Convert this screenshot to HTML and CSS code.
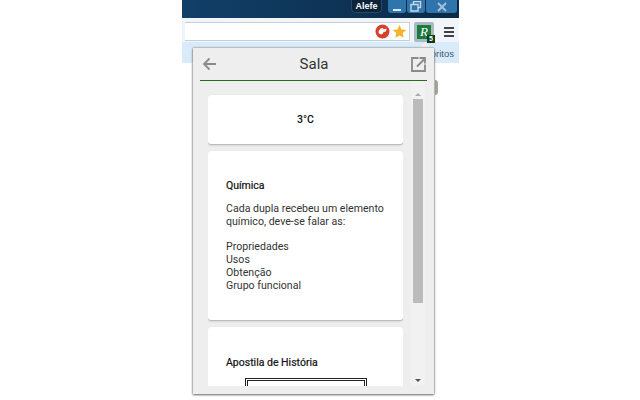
FILE: index.html
```html
<!DOCTYPE html>
<html>
<head>
  <title>Sala</title>
  <link rel="stylesheet" href="styles.css">
</head>
<body>
  <div class="browser">
    <div class="titleBar">
      <div class="userName">Alefe</div>
      <div class="winButtons">
        <div class="winButton minButton"><span class="minGlyph"></span></div>
        <div class="winButton maxButton">
          <svg width="12" height="11" viewBox="0 0 12 11"><path d="M3.500 3V.5h7v6H8M1 3.500h7v6.500H1z" fill="none" stroke="#c9d8e6" stroke-width="1.400"/></svg>
        </div>
        <div class="winButton closeButton">
          <svg width="12" height="10" viewBox="0 0 12 10"><path d="M2 1l8 8M10 1L2 9" fill="none" stroke="#a9c0d4" stroke-width="2"/></svg>
        </div>
      </div>
    </div>
    <div class="toolBar">
      <div class="urlBox">
        <svg class="redIcon" width="15" height="15" viewBox="0 0 15 15"><circle cx="7.500" cy="7.500" r="7" fill="#d8402b"/><path d="M3.500 8.500C3.500 6 5.500 4 8 4l.5 1.500 3-1-.5 3-2.500.5C8 11 4.500 11 3.500 8.500z" fill="#fff"/></svg>
        <svg class="star" width="15" height="15" viewBox="0 0 15 15"><path d="M7.500 1l2 4.400 4.800.5-3.600 3.200 1 4.700-4.200-2.400-4.200 2.400 1-4.700L.7 5.900l4.800-.5z" fill="#f7b32b"/></svg>
      </div>
      <div class="extButton">
        <div class="extIcon">R</div>
        <div class="extBadge">5</div>
      </div>
      <div class="menuIcon"><span></span><span></span><span></span></div>
    </div>
    <div class="bookmarks"><span class="bookmarkText">oritos</span></div>
  </div>

  <div class="pageMark"></div>
  <div class="popupArrow"></div>
  <div class="popup">
    <div class="popupHeader">
      <svg class="headIcon" width="14" height="14" viewBox="0 0 14 14"><path d="M14 7H2M7.500 1.500L2 7l5.500 5.500" fill="none" stroke="#8a8a8a" stroke-width="1.800"/></svg>
      <div class="popupTitle">Sala</div>
      <svg class="headIcon" width="15" height="15" viewBox="0 0 15 15"><path d="M7.500 1H1v13h13V7.500M6 9.500L14 1.500M8.500 1H14v5.500" fill="none" stroke="#8a8a8a" stroke-width="1.800"/></svg>
    </div>
    <div class="popupBody">
      <div class="cardList">
        <div class="card tempCard">3°C</div>
        <div class="card textCard">
          <div class="cardTitle">Química</div>
          <p class="cardText">Cada dupla recebeu um elemento químico, deve-se falar as:</p>
          <p class="cardText">Propriedades<br>Usos<br>Obtenção<br>Grupo funcional</p>
        </div>
        <div class="card lastCard">
          <div class="cardTitle">Apostila de História</div>
          <div class="docFrame"></div>
        </div>
      </div>
      <div class="scrollBar">
        <div class="arrowUp"></div>
        <div class="thumb"></div>
        <div class="arrowDown"></div>
      </div>
    </div>
  </div>
</body>
</html>
```

FILE: styles.css
```css
html, body {
  margin: 0;
  height: 400px;
  overflow: hidden;
  background-color: white;
  font-family: Roboto, "Liberation Sans", sans-serif;
}

.browser {
  width: 277px;
  margin-left: 182px;
}

.titleBar {
  height: 18px;
  background: linear-gradient(90deg, #123f68, #0a2a47);
  display: flex;
  justify-content: flex-end;
  align-items: flex-start;
  padding-right: 2px;
}

.userName {
  width: 31px;
  height: 13px;
  margin-right: 6px;
  background-color: #0b2438;
  border: 1px solid #2a4a63;
  border-top: none;
  border-radius: 0 0 5px 5px;
  box-sizing: border-box;
  color: white;
  font-family: "Liberation Sans", sans-serif;
  font-size: 9px;
  font-weight: bold;
  line-height: 12px;
  text-align: center;
}

.winButtons {
  display: flex;
  height: 13px;
}

.winButton {
  background-color: #2f74ab;
  border-radius: 0 0 3px 3px;
  display: flex;
  justify-content: center;
  align-items: center;
  margin-right: 1px;
}

.minButton {
  width: 18px;
}

.minGlyph {
  width: 8px;
  height: 2px;
  margin-top: 6px;
  background-color: #dfe8f0;
}

.maxButton {
  width: 18px;
}

.closeButton {
  width: 31px;
  margin-right: 0;
}

.toolBar {
  height: 24px;
  background-color: #f1f5f9;
  display: flex;
  align-items: flex-start;
  padding-top: 4px;
  box-sizing: border-box;
}

.urlBox {
  width: 225px;
  height: 19px;
  box-sizing: border-box;
  background-color: white;
  border: 1px solid #c3cfd9;
  border-left: none;
  display: flex;
  justify-content: flex-end;
  align-items: center;
  gap: 2px;
  padding-right: 2px;
  margin-left: 3px;
}

.redIcon {
  display: block;
}

.star {
  display: block;
}

.extButton {
  width: 20px;
  height: 20px;
  margin-left: 4px;
  background-color: #a9bbc0;
  border-radius: 2px;
  position: relative;
  display: flex;
  justify-content: center;
  align-items: center;
}

.extIcon {
  width: 14px;
  height: 14px;
  background-color: #1b7a3c;
  color: white;
  font-family: "Liberation Serif", serif;
  font-style: italic;
  font-size: 13px;
  line-height: 13px;
  text-align: center;
}

.extBadge {
  position: absolute;
  right: -1px;
  bottom: -1px;
  width: 8px;
  height: 8px;
  background-color: #0b3d1a;
  color: white;
  font-family: "Liberation Sans", sans-serif;
  font-size: 7px;
  font-weight: bold;
  line-height: 8px;
  text-align: center;
}

.menuIcon {
  width: 10px;
  margin-top: 5px;
  margin-left: 10px;
  display: flex;
  flex-direction: column;
  gap: 2px;
}

.menuIcon span {
  height: 2px;
  background-color: #444;
}

.bookmarks {
  height: 21px;
  background-color: #d9ebfa;
  text-align: right;
  padding-right: 5px;
}

.bookmarkText {
  color: #3d5a70;
  font-family: "Liberation Sans", sans-serif;
  font-size: 9.500px;
  line-height: 20px;
}

.pageMark {
  position: absolute;
  left: 435px;
  top: 80px;
  width: 3px;
  height: 15px;
  border-radius: 0 4px 4px 0;
  background-color: #a8a49c;
}

.popupArrow {
  position: absolute;
  left: 419px;
  top: 42px;
  width: 0;
  height: 0;
  border: 6px solid transparent;
  border-top: none;
  border-bottom: 6px solid #f0f0f0;
}

.popup {
  position: absolute;
  left: 193px;
  top: 48px;
  width: 241px;
  height: 346px;
  background-color: #eeeeee;
  box-shadow: 0 0 2px #777, 0 1px 2px #777;
  overflow: hidden;
}

.popupHeader {
  height: 32px;
  margin: 0 7px;
  padding: 0 1px 0 2px;
  border-bottom: 1px solid #2a6b1f;
  display: flex;
  justify-content: space-between;
  align-items: center;
}

.popupTitle {
  margin-left: 1px;
  color: #333;
  font-size: 15px;
}

.popupBody {
  display: flex;
  height: 305px;
}

.cardList {
  width: 195px;
  margin-left: 15px;
  padding-top: 14px;
  overflow: hidden;
}

.card {
  background-color: white;
  border-radius: 3px;
  box-shadow: 0 1px 2px #aaa;
  margin-bottom: 7px;
}

.tempCard {
  height: 49px;
  line-height: 49px;
  text-align: center;
  color: #111;
  font-size: 10.500px;
  font-weight: 500;
}

.textCard {
  height: 169px;
  box-sizing: border-box;
  padding: 28px 18px 0;
}

.lastCard {
  height: 200px;
  box-sizing: border-box;
  padding: 29px 18px 0;
}

.cardTitle {
  color: #111;
  font-size: 10.500px;
  line-height: 13px;
  margin-bottom: 11px;
  -webkit-text-stroke: 0.2px #111;
}

.cardText {
  margin: 0 0 13px;
  color: #333;
  font-size: 10.600px;
  line-height: 12.700px;
}

.docFrame {
  width: 116px;
  height: 40px;
  margin: 10px 0 0 21px;
  border: 1px solid #222;
  outline: 1px solid #222;
  outline-offset: 1px;
}

.scrollBar {
  width: 14px;
  margin-left: 8px;
  padding-top: 12px;
  padding-bottom: 4px;
  box-sizing: border-box;
  background-color: #f1f1f1;
  display: flex;
  flex-direction: column;
  align-items: center;
  height: 305px;
}

.thumb {
  width: 10px;
  height: 204px;
  margin-top: 3px;
  background-color: #bbbbbb;
}

.arrowUp {
  width: 0;
  height: 0;
  border: 3px solid transparent;
  border-top: none;
  border-bottom: 3px solid #aaa;
}

.arrowDown {
  width: 0;
  height: 0;
  margin-top: auto;
  border: 3px solid transparent;
  border-bottom: none;
  border-top: 3px solid #555;
}
```
